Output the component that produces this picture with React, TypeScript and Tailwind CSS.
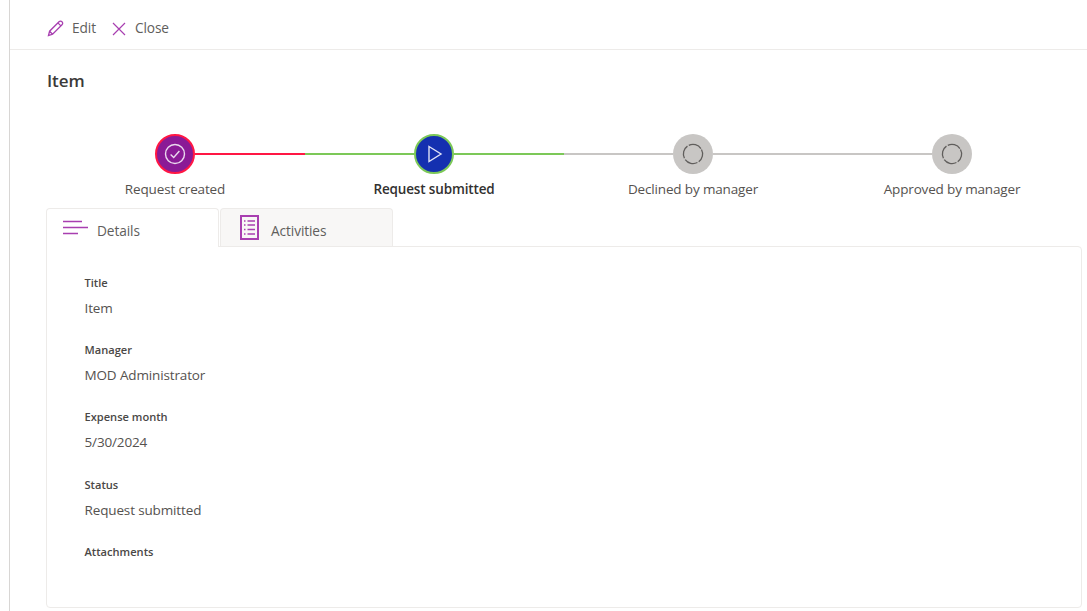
import React from "react";

const font = { fontFamily: '"Open Sans", "Noto Sans", sans-serif' };

function Step({ label, bold, circle, left, right, children }: { label: string; bold?: boolean; circle: string; left: string; right: string; children: React.ReactNode }) {
  return (
    <div className="flex flex-col items-center">
      <div className="flex w-full items-center">
        <div className={`h-[2px] flex-1 ${left}`} />
        <div className={`flex h-[40px] w-[40px] shrink-0 items-center justify-center rounded-full ${circle}`}>{children}</div>
        <div className={`h-[2px] flex-1 ${right}`} />
      </div>
      <div className={`mt-[5px] whitespace-nowrap text-[13.5px] leading-[20px] tracking-[-0.15px] ${bold ? "font-semibold text-[#323130]" : "text-[#55524f]"}`}>{label}</div>
    </div>
  );
}

function Pending() {
  return (
    <svg width="22" height="22" viewBox="0 0 22 22" fill="none" stroke="#605e5c" strokeWidth="1.3">
      <circle cx="11" cy="11" r="9.6" strokeDasharray="13.5 1.6" transform="rotate(-28 11 11)" />
    </svg>
  );
}

function Field({ label, value }: { label: string; value?: string }) {
  return (
    <div className="h-[67.2px]">
      <div className="text-[11.1px] font-semibold leading-[18px] text-[#4a4846]">{label}</div>
      {value && <div className="mt-[6px] text-[13.5px] leading-[20px] tracking-[-0.14px] text-[#55524f]">{value}</div>}
    </div>
  );
}

export default function App() {
  return (
    <div style={font} className="h-[611px] w-[1087px] overflow-hidden bg-white">
      <div className="ml-[9px] h-full border-l border-[#d8d6d4]">
        <div className="flex h-[50px] items-center border-b border-[#edebe9] pl-[37px] pt-[8px] text-[13.7px] tracking-[-0.1px] text-[#605e5c]">
          <svg width="17" height="17" viewBox="0 0 17 17" fill="none" stroke="#a83fb0" strokeWidth="1.3" className="mr-[8px]">
            <path d="M1.5 15.5 L2.6 11.2 L12 1.8 C12.9 0.9 14.2 0.9 15 1.8 C15.9 2.6 15.9 3.9 15 4.8 L5.6 14.2 Z M2.6 11.2 L5.6 14.2 M10.9 2.9 L13.9 5.9" />
          </svg>
          <span>Edit</span>
          <svg width="14" height="14" viewBox="0 0 14 14" fill="none" stroke="#a83fb0" strokeWidth="1.2" className="ml-[16px] mr-[9px]">
            <path d="M1 1 L13 13 M13 1 L1 13" />
          </svg>
          <span>Close</span>
        </div>
        <div className="pl-[37px] pt-[19px] text-[17px] font-semibold leading-[24px] tracking-[-0.1px] text-[#3b3a39]">Item</div>
        <div className="ml-[35.5px] mt-[41px] grid w-[1036px] grid-cols-4">
          <Step label="Request created" circle="bg-[#8a1a96] border-2 border-[#ff1744]" left="" right="bg-[#ff1744]">
            <svg width="22" height="22" viewBox="0 0 22 22" fill="none" stroke="#ead9ee" strokeWidth="1.4">
              <circle cx="11" cy="11" r="9.5" />
              <path d="M6.6 11.4 L9.7 14.4 L15.4 8" />
            </svg>
          </Step>
          <Step label="Request submitted" bold circle="bg-[#1430b0] border-2 border-[#7cc858]" left="bg-[#7cc858]" right="bg-[#7cc858]">
            <svg width="16" height="18" viewBox="0 0 16 18" fill="none" stroke="#dfe2f6" strokeWidth="1.4" className="ml-[2px]">
              <path d="M2 1.5 L14 9 L2 16.5 Z" />
            </svg>
          </Step>
          <Step label="Declined by manager" circle="bg-[#c8c6c4]" left="bg-[#c8c6c4]" right="bg-[#c8c6c4]">
            <Pending />
          </Step>
          <Step label="Approved by manager" circle="bg-[#c8c6c4]" left="bg-[#c8c6c4]" right="">
            <Pending />
          </Step>
        </div>
        <div className="relative ml-[36px] mt-[9px] flex h-[38px] w-[1036px] items-start gap-[1px]">
          <div className="relative z-10 flex h-[39px] w-[173px] items-center rounded-t-[4px] border border-b-0 border-[#edebe9] bg-white pl-[16px] pt-[6px] text-[13.7px] tracking-[-0.1px] text-[#605e5c]">
            <svg width="25" height="15" viewBox="0 0 25 15" fill="none" stroke="#a83fb0" strokeWidth="1.6" className="mr-[9px] mb-[8px]">
              <path d="M0 1.5 H19 M0 7.5 H25 M0 13.5 H15" />
            </svg>
            Details
          </div>
          <div className="flex h-[38px] w-[173px] items-center rounded-t-[4px] border border-b-0 border-[#edebe9] bg-[#f8f7f6] pl-[19px] pt-[8px] text-[13.7px] tracking-[-0.1px] text-[#605e5c]">
            <svg width="19" height="25" viewBox="0 0 19 25" fill="none" stroke="#a83fb0" strokeWidth="2" className="mr-[12px] mb-[8px]">
              <rect x="1" y="1" width="17" height="23" />
              <path d="M4 6 H5.5 M7.5 6 H15 M4 10 H5.5 M7.5 10 H15 M4 14.5 H5.5 M7.5 14.5 H15 M4 19 H5.5 M7.5 19 H15" strokeWidth="1.4" />
            </svg>
            Activities
          </div>
        </div>
        <div className="ml-[36px] h-[362px] w-[1036px] rounded-b-[4px] rounded-tr-[4px] border border-[#edebe9] bg-white pl-[37.5px] pt-[27px]">
          <Field label="Title" value="Item" />
          <Field label="Manager" value="MOD Administrator" />
          <Field label="Expense month" value="5/30/2024" />
          <Field label="Status" value="Request submitted" />
          <Field label="Attachments" />
        </div>
      </div>
    </div>
  );
}
